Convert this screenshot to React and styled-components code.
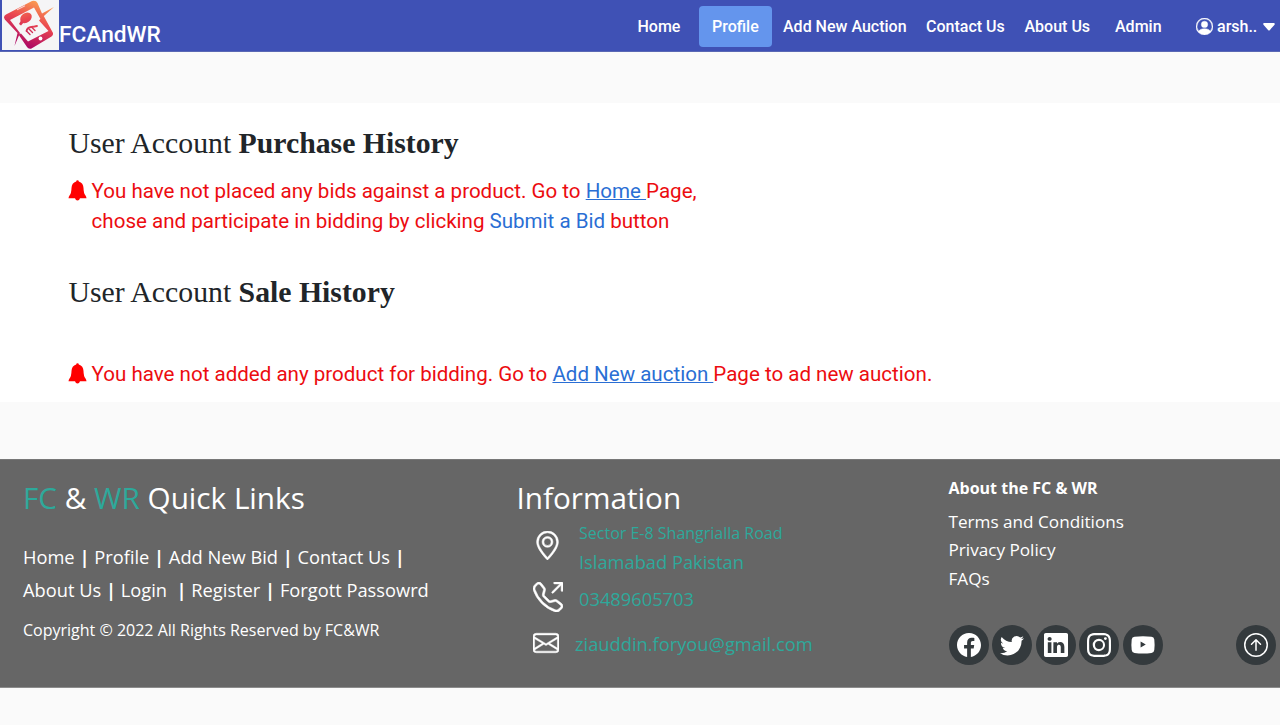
import React from "react";
import styled, { createGlobalStyle } from "styled-components";
import {
  BsPersonCircle, BsCaretDownFill, BsGeoAlt, BsTelephoneOutbound, BsEnvelope,
  BsFacebook, BsTwitter, BsLinkedin, BsInstagram, BsArrowUpCircle,
} from "react-icons/bs";

const GlobalStyle = createGlobalStyle`
  * { box-sizing: border-box; }
  body { margin: 0; background: #fafafa; font-family: Roboto, "Liberation Sans", sans-serif; }
  h1, h2, h3, p { margin: 0; font-weight: 400; }
  a { color: inherit; text-decoration: none; }
  svg { display: block; flex: none; }
`;

const Navbar = styled.header`
  height: 52px;
  display: flex;
  justify-content: space-between;
  background: #3f51b5;
  border-bottom: 1px solid #5a68b4;
  color: #fff;
`;
const Brand = styled.a`
  display: flex;
  align-items: flex-start;
  padding-left: 2px;
  font-size: 22.7px;
  font-weight: 500;
  line-height: 28px;
`;
const BrandName = styled.span`
  padding-top: 21px;
`;
const Nav = styled.nav`
  display: flex;
  padding-top: 6px;
  font-size: 16px;
  font-weight: 500;
  line-height: 41px;
`;
const NavLink = styled.a`
  width: ${(p) => p.$w}px;
  height: 41px;
  white-space: nowrap;
`;
const ActiveLink = styled(NavLink)`
  padding-left: 13px;
  margin-right: 11px;
  border-radius: 4px;
  background: #6495ed;
`;
const UserMenu = styled.a`
  width: 84px;
  height: 41px;
  display: flex;
  align-items: center;
  gap: 4px;
`;
const PersonIcon = styled(BsPersonCircle)`
  stroke: currentColor;
  stroke-width: 0.4;
`;

const Main = styled.main`
  height: 299px;
  margin: 51px 0 57px;
  padding: 23px 68px 0;
  background: #fff;
`;
const Title = styled.h1`
  padding-left: 0.4px;
  font-family: "Liberation Serif", serif;
  font-size: 29.75px;
  line-height: 34px;
  color: #212529;
`;
const Notice = styled.div`
  display: flex;
  gap: 4.6px;
  margin: ${(p) => p.$m};
  color: #ec0c10;
  font-size: 20.55px;
  line-height: 30px;
`;
const BellSvg = styled.svg`
  margin: 4px 0 0;
  fill: red;
`;
const Accent = styled.span`
  color: #2a6ed4;
`;
const Link = styled.a`
  color: #2a6ed4;
  text-decoration: underline;
  text-decoration-thickness: 1px;
  white-space: pre;
`;

const Footer = styled.footer`
  height: 229px;
  display: grid;
  grid-template-columns: 493.5px 432px 1fr;
  padding-left: 23px;
  background: #666;
  border-top: 1px solid #777;
  border-bottom: 1px solid #8c8c8c;
  color: #fff;
  font-family: "Open Sans", sans-serif;
`;
const FooterTitle = styled.h2`
  padding-top: 18px;
  font-size: 29.7px;
  line-height: 40px;
`;
const Teal = styled.span`
  color: #2ea99b;
`;
const QuickLinks = styled.p`
  padding-top: 22px;
  font-size: 18.27px;
  line-height: 33px;
  white-space: pre;
  b { font-weight: 700; }
`;
const Copyright = styled.p`
  padding-top: 13px;
  font-size: 16px;
  line-height: 22px;
`;
const Contact = styled.div`
  display: grid;
  grid-template-columns: 46px 1fr;
  align-items: center;
  height: ${(p) => p.$h}px;
  padding-left: 16.5px;
  color: #2ea99b;
  font-size: 18.3px;
  line-height: 29px;
  svg { color: #fff; stroke: #fff; stroke-width: 0.3; margin-bottom: ${(p) => p.$lift || 0}px; }
`;
const SmallLine = styled.div`
  padding-top: 1px;
  font-size: 16px;
  line-height: 28px;
`;
const Email = styled.span`
  margin-left: -4px;
`;
const AboutTitle = styled.h3`
  padding-top: 17px;
  font-size: 16px;
  font-weight: 700;
  line-height: 22px;
`;
const AboutList = styled.div`
  display: flex;
  flex-direction: column;
  padding-top: 9px;
  font-size: 17.15px;
  line-height: 28.4px;
`;
const SocialRow = styled.div`
  display: flex;
  gap: 3.5px;
  padding: 31.8px 4.5px 0 0;
`;
const RoundButton = styled.a`
  width: 40px;
  height: 40px;
  display: grid;
  place-items: center;
  border-radius: 50%;
  background: #343a3d;
  margin-left: ${(p) => (p.$end ? "auto" : "0")};
`;

const Logo = () => (
  <svg width="57" height="50" viewBox="2 0 57 50">
    <defs>
      <linearGradient id="flame" gradientUnits="userSpaceOnUse" x1="42" y1="2" x2="24" y2="48">
        <stop offset="0" stopColor="#fba052" />
        <stop offset="0.45" stopColor="#ea4650" />
        <stop offset="1" stopColor="#a80466" />
      </linearGradient>
    </defs>
    <rect x="2" width="57" height="50" fill="#f5f5f6" />
    <g fill="url(#flame)">
      <path d="M4 17.500 Q4 15.500 6 14.500 L32 1 Q36 0 37.500 3 L42 13.500 L54 7 L40.500 19 L34 7.500 L10 20 L20 33 L14.500 46 L17.500 33 L4.800 19.500 Z" />
      <path d="M39 20.500 L43.500 15.500 L53 33 Q53.500 35.500 51.500 36.500 L31.500 48.500 Q28.500 49.500 27 47 L18.500 34.500 L21 33.500 L28 41.500 L48.500 31 Z" />
      <ellipse cx="26" cy="17.800" rx="6.300" ry="4.800" transform="rotate(-38 26 17.800)" />
      <path d="M21.500 19.500 L24 22 L21 25.500 L19 24 Z" />
    </g>
    <g fill="none" stroke="url(#flame)" strokeWidth="1.400" strokeLinecap="round" strokeLinejoin="round">
      <path d="M31.500 27 L35 30.500 M29 29 L32.500 32.500 M26.500 31 L30 34.500" />
      <path d="M31.500 27 L34.500 26.500 L37 26" strokeWidth="1.800" />
      <path d="M26.500 31 Q27 27.500 31.500 27" strokeWidth="1.800" />
    </g>
    <path d="M17.500 9.500 L24.500 6" stroke="#f8d0cf" strokeWidth="1.300" strokeLinecap="round" />
    <circle cx="40.500" cy="38.500" r="1.900" fill="#fff" />
  </svg>
);

const Bell = () => (
  <BellSvg width="19" height="21" viewBox="0 0 19 21">
    <path d="M8.200 1.600 Q8.200 .3 9.500 .3 Q10.800 .3 10.800 1.600 Q15.300 3 15.500 8 Q15.600 13.300 17.500 15.500 Q18.300 16.500 18.500 18.200 H12 Q11.300 20.500 9.500 20.500 Q7.700 20.500 7 18.200 H.5 Q.7 16.500 1.500 15.500 Q3.400 13.300 3.500 8 Q3.700 3 8.200 1.600 Z" />
  </BellSvg>
);

const YoutubeIcon = ({ size }) => (
  <svg width={size} height={size} viewBox="0 0 24 24" fill="#fff">
    <path fillRule="evenodd" d="M3.500 3.800 Q12 2.800 20.500 3.800 Q23 4 23.300 6.500 Q23.900 11.500 23.300 17 Q23 19.800 20.500 20 Q12 21 3.500 20 Q1 19.800 .7 17 Q.1 11.500 .7 6.500 Q1 4 3.500 3.800 Z M9.600 8.600 L9.600 14.400 L14.800 11.500 Z" />
  </svg>
);

const socials = [BsFacebook, BsTwitter, BsLinkedin, BsInstagram, YoutubeIcon];

export default function App() {
  return (
    <>
      <GlobalStyle />
      <Navbar>
        <Brand><Logo /><BrandName>FCAndWR</BrandName></Brand>
        <Nav>
          <NavLink $w={61.5}>Home</NavLink>
          <ActiveLink $w={73}>Profile</ActiveLink>
          <NavLink $w={143}>Add New Auction</NavLink>
          <NavLink $w={98.5}>Contact Us</NavLink>
          <NavLink $w={90.5}>About Us</NavLink>
          <NavLink $w={81}>Admin</NavLink>
          <UserMenu><PersonIcon size={17} />arsh..<BsCaretDownFill size={16} /></UserMenu>
        </Nav>
      </Navbar>
      <Main>
        <Title>User Account <b>Purchase History</b></Title>
        <Notice $m="16px 0 39px">
          <Bell />
          <p>
            You have not placed any bids against a product. Go to <Link>Home </Link>Page,<br />
            chose and participate in bidding by clicking <Accent>Submit a Bid</Accent> button
          </p>
        </Notice>
        <Title>User Account <b>Sale History</b></Title>
        <Notice $m="50px 0 0">
          <Bell />
          <p>You have not added any product for bidding. Go to <Link>Add New auction </Link>Page to ad new auction.</p>
        </Notice>
      </Main>
      <Footer>
        <section>
          <FooterTitle><Teal>FC</Teal> &amp; <Teal>WR</Teal> Quick Links</FooterTitle>
          <QuickLinks>
            <a>Home</a> <b>|</b> <a>Profile</a> <b>|</b> <a>Add New Bid</a> <b>|</b> <a>Contact Us</a> <b>|</b><br />
            <a>About Us</a> <b>|</b> <a>Login</a>{"  "}<b>|</b> <a>Register</a> <b>|</b> <a>Forgott Passowrd</a>
          </QuickLinks>
          <Copyright>Copyright © 2022 All Rights Reserved by FC&amp;WR</Copyright>
        </section>
        <section>
          <FooterTitle>Information</FooterTitle>
          <Contact $h={58} $lift={4}><BsGeoAlt size={29} /><div><SmallLine>Sector E-8 Shangrialla Road</SmallLine>Islamabad Pakistan</div></Contact>
          <Contact $h={44} $lift={2}><BsTelephoneOutbound size={30} />03489605703</Contact>
          <Contact $h={47} $lift={1}><BsEnvelope size={26} /><Email>ziauddin.foryou@gmail.com</Email></Contact>
        </section>
        <section>
          <AboutTitle>About the FC &amp; WR</AboutTitle>
          <AboutList><a>Terms and Conditions</a><a>Privacy Policy</a><a>FAQs</a></AboutList>
          <SocialRow>
            {socials.map((Icon, i) => <RoundButton key={i}><Icon size={24} /></RoundButton>)}
            <RoundButton $end><BsArrowUpCircle size={24} /></RoundButton>
          </SocialRow>
        </section>
      </Footer>
    </>
  );
}
